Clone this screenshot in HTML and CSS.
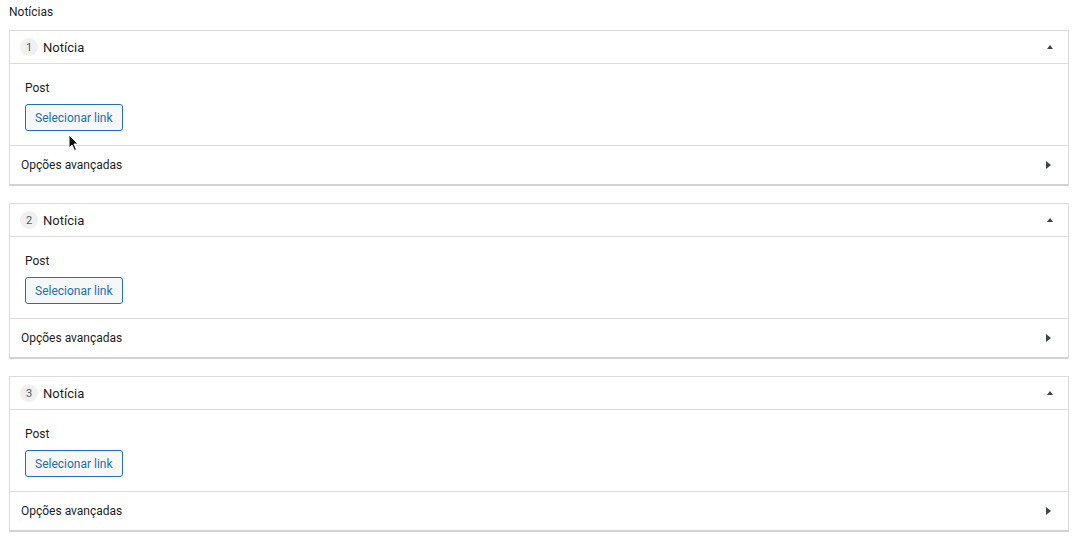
FILE: index.html
```html
<!DOCTYPE html>
<html lang="pt-BR">
<head>
<meta charset="UTF-8">
<meta name="viewport" content="width=device-width, initial-scale=1.0">
<title>Notícias</title>
<link rel="stylesheet" href="styles.css">
</head>
<body>

<div class="field">
    <div class="field-label">Notícias</div>

    <div class="panel">
        <div class="panel-head">
            <span class="num">1</span>
            <span class="panel-title">Notícia</span>
            <span class="caret-up"></span>
        </div>
        <div class="panel-body">
            <div class="sub-label">Post</div>
            <button type="button" class="btn">Selecionar link</button>
        </div>
        <div class="panel-adv">
            <span>Opções avançadas</span>
            <span class="caret-right"></span>
        </div>
        <svg class="cursor" width="12" height="18" viewBox="0 0 12 18">
            <path d="M1 1 L1 14 L4 11 L6.5 16.5 L8.5 15.5 L6 10 L10 10 Z" fill="#111" stroke="#fff" stroke-width="1"/>
        </svg>
    </div>

    <div class="panel">
        <div class="panel-head">
            <span class="num">2</span>
            <span class="panel-title">Notícia</span>
            <span class="caret-up"></span>
        </div>
        <div class="panel-body">
            <div class="sub-label">Post</div>
            <button type="button" class="btn">Selecionar link</button>
        </div>
        <div class="panel-adv">
            <span>Opções avançadas</span>
            <span class="caret-right"></span>
        </div>
    </div>

    <div class="panel">
        <div class="panel-head">
            <span class="num">3</span>
            <span class="panel-title">Notícia</span>
            <span class="caret-up"></span>
        </div>
        <div class="panel-body">
            <div class="sub-label">Post</div>
            <button type="button" class="btn">Selecionar link</button>
        </div>
        <div class="panel-adv">
            <span>Opções avançadas</span>
            <span class="caret-right"></span>
        </div>
    </div>
</div>

</body>
</html>
```

FILE: styles.css
```css
body {
    font-family: Roboto, "Noto Sans", Arial, sans-serif;
    margin: 0;
    padding: 0;
    background-color: #fff;
    color: #1e1e1e;
}
.field {
    padding: 4px 11px 0 9px;
}
.field-label {
    font-size: 12px;
    height: 26px;
    line-height: 16px;
}
.panel {
    position: relative;
    border: 1px solid #dcdcde;
    border-bottom: 2px solid #d0d2d6;
    margin-bottom: 17px;
}
.panel-head {
    display: flex;
    align-items: center;
    height: 32px;
    padding: 0 12px 0 10px;
    border-bottom: 1px solid #dcdcde;
    font-size: 13px;
}
.num {
    width: 18px;
    height: 18px;
    border-radius: 50%;
    background-color: #f0f0f1;
    font-size: 11px;
    color: #50575e;
    display: flex;
    align-items: center;
    justify-content: center;
    margin-right: 5px;
}
.panel-title {
    flex: 1;
}
.caret-up {
    width: 0;
    height: 0;
    border-left: 3px solid transparent;
    border-right: 3px solid transparent;
    border-bottom: 4px solid #3c434a;
    margin-right: 3px;
}
.panel-body {
    padding: 16px 15px 14px;
    border-bottom: 1px solid #dcdcde;
}
.sub-label {
    font-size: 12px;
    line-height: 16px;
    margin-bottom: 8px;
}
.btn {
    font-family: inherit;
    font-size: 12px;
    color: #2271b1;
    background-color: #f6f7f7;
    border: 1px solid #2271b1;
    border-radius: 3px;
    height: 27px;
    padding: 0 9px;
    cursor: pointer;
}
.panel-adv {
    display: flex;
    align-items: center;
    justify-content: space-between;
    height: 38px;
    padding: 0 17px 0 11px;
    font-size: 12px;
}
.caret-right {
    width: 0;
    height: 0;
    border-top: 4px solid transparent;
    border-bottom: 4px solid transparent;
    border-left: 5px solid #3c434a;
}
.cursor {
    position: absolute;
    left: 58px;
    top: 103px;
}
```
